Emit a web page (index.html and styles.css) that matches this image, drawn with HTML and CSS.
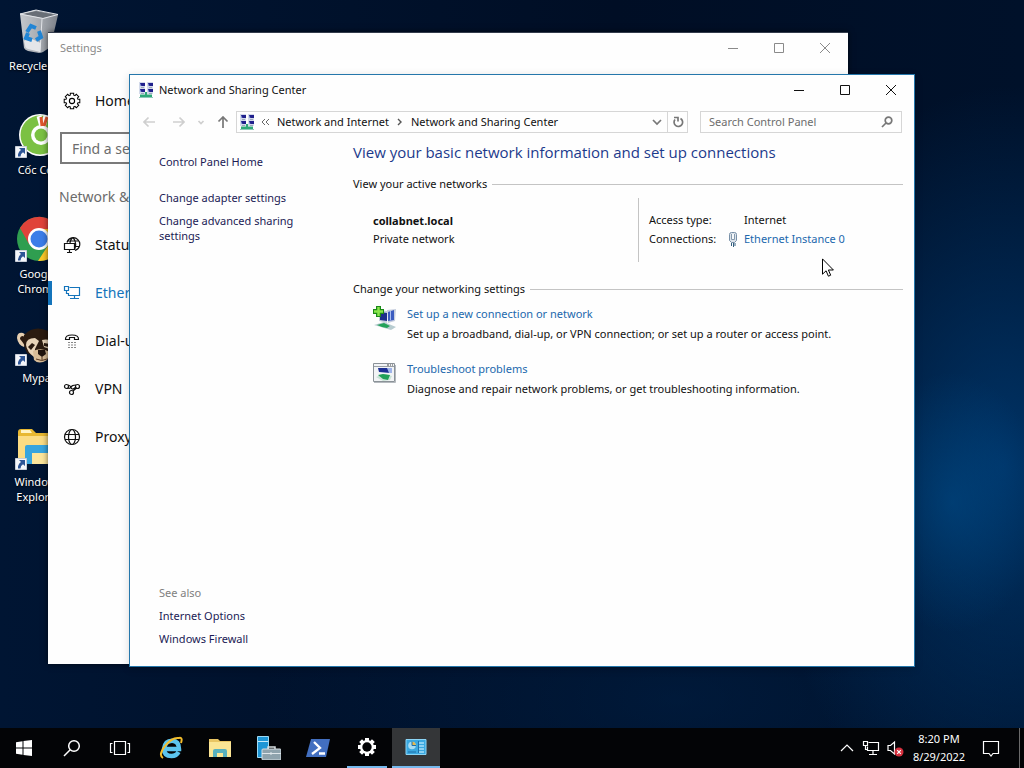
FILE: index.html
```html
<!DOCTYPE html>
<html lang="en">
<head>
<meta charset="utf-8">
<title>Network and Sharing Center</title>
<link rel="stylesheet" href="styles.css">
</head>
<body>
<svg class="defs" aria-hidden="true">
  <defs>
    <symbol id="net" viewBox="0 0 16 16">
      <path fill="#d3daea" d="M1 0h6v6H1zM9 0h6v6H9zM1 6h6v6H1zM9 6h6v6H9z"/>
      <path fill="#20208c" d="M2 1h5v3H2zM10 1h5v3h-5zM2 7h5v3H2zM10 7h5v3h-5z"/>
      <path fill="#8fa0d8" d="M2 1l1.500 3H2zM10 1l1.500 3H10zM2 7l1.500 3H2zM10 7l1.500 3H10z"/>
      <path fill="#8994ac" d="M3 5h3v.8H3zM11 5h3v.8h-3zM3 11h3v.8H3zM11 11h3v.8h-3z"/>
      <path fill="#2fa878" d="M7 10h2v2.500h5V15H2v-2.500h5z"/><path fill="#8fc8b8" d="M1 15h14v1H1z"/>
    </symbol>
    <symbol id="min" viewBox="0 0 12 12"><path d="M1 6.500h10" fill="none" stroke="currentColor"/></symbol>
    <symbol id="max" viewBox="0 0 12 12"><path d="M1.500 1.500h9v9h-9z" fill="none" stroke="currentColor"/></symbol>
    <symbol id="close" viewBox="0 0 12 12"><path d="M1 1l10 10M11 1L1 11" fill="none" stroke="currentColor"/></symbol>
    <symbol id="shortcut" viewBox="0 0 12 12"><path fill="#f4f6fa" stroke="#c8ced8" d="M.5.5h11v11H.5z"/><path fill="#2d5596" d="M4 2h6v6L8 6.200Q5.500 7.500 5.500 10.500H3Q2.500 6.500 6 4z"/></symbol>
  </defs>
</svg>
<div class="screen">
  <main class="desktop">
    <ul class="shortcuts">
      <li class="shortcut">
        <svg class="pic" viewBox="0 0 48 48"><defs><linearGradient id="bin"><stop stop-color="#c5c8cc"/><stop offset=".5" stop-color="#a8acb2"/><stop offset="1" stop-color="#7d828a"/></linearGradient></defs><path fill="url(#bin)" d="M6 6l4 34q1 2 4 3l11 2q2 0 4-1l6-4q2-1 2-3l7-30-23-5z"/><path fill="#686e76" d="M8 6l14-3 20 4-13 3z"/><path fill="none" stroke="#e2e4e8" d="M6 6l16-4 22 4.500-15 4zM28 11l-2 33"/><path fill="#e4e6e9" d="M10 33l6-3 6 3 5 2-1 9-12-3q-3-1-3-4z"/><g fill="none" stroke="#2185d5" stroke-width="4"><path d="M13 24l4-6 5 2M25 23l2 6-5 3M18 32l-6-2 2-5"/></g></svg>
        <span>Recycle Bin</span>
      </li>
      <li class="shortcut">
        <svg class="pic" viewBox="0 0 48 48"><circle cx="26" cy="23" r="21" fill="#fff"/><circle cx="26" cy="23" r="19.500" fill="#7bc143"/><circle cx="27" cy="23" r="10" fill="#fff"/><circle cx="27" cy="23" r="6.500" fill="#7bc143"/><path d="M25 4l3 11M32 4l-3 11" stroke="#fff" stroke-width="5"/><path d="M27 5l1 9M33 5l-3 9" stroke="#e0562c" stroke-width="3"/><use href="#shortcut" x="1" y="34" width="12" height="12"/></svg>
        <span>Cốc Cốc</span>
      </li>
      <li class="shortcut">
        <svg class="pic" viewBox="0 0 48 48"><circle cx="25" cy="23" r="22" fill="#2f9e50"/><path fill="#e0433a" d="M6 12A22 22 0 0 1 45 13H25L15 28z"/><path fill="#fbc72a" d="M25 13h20a22 22 0 0 1-21 32l11-17z"/><circle cx="25" cy="23" r="11" fill="#fff"/><circle cx="25" cy="23" r="8.500" fill="#3b7de8"/><use href="#shortcut" x="1" y="34" width="12" height="12"/></svg>
        <span>Google Chrome</span>
      </li>
      <li class="shortcut">
        <svg class="pic" viewBox="0 0 48 48"><path fill="#e6cfb0" d="M3 18q0-6 6-5l6 4-5 10q-6-2-7-9z"/><path fill="#2b1a10" d="M6 19q0-3 3-3l4 3-3 5z"/><path fill="#2b1b10" d="M10 15Q18 7 28 9t18 12l-5 16-13 4-15-8q-5-10-3-18z"/><path fill="#e8d4b8" d="M12 25q0-7 9-7l4 3-4 8q0 5-1 8-7-5-8-12zM28 20q8-2 12 4l-2 6-8-3z"/><path fill="#2b1b10" d="M14 27l4-4 3 2-4 5zM30 23l6 1-1 3-5-1z"/><path fill="#d8bd98" d="M19 31q8-4 17 1l-3 8q-8 5-13 0z"/><path fill="#20140e" d="M24 30h7l1 4-4 3-4-3z"/><path fill="none" stroke="#5b3b23" d="M28 37v3M22 39q6 3 11 0"/><use href="#shortcut" x="1" y="34" width="12" height="12"/></svg>
        <span>Mypal</span>
      </li>
      <li class="shortcut">
        <svg class="pic" viewBox="0 0 48 48"><path fill="#e8b831" d="M4 8q0-3 3-3h11l4 4h20v8H4z"/><path fill="#fff3c2" d="M7 6h9l2 3H7z"/><path fill="#fbdc83" d="M4 12h40v28H4z"/><path fill="#37a5de" d="M11 23q0-2 2-2h30v19H34V29H18v11h-7z"/><path fill="#fde69b" d="M18 29h16v11H18z"/><use href="#shortcut" x="1" y="34" width="12" height="12"/></svg>
        <span>Windows Explorer</span>
      </li>
    </ul>

    <section class="window settings" aria-label="Settings">
      <header class="titlebar">
        <h2 class="title">Settings</h2>
        <div class="controls">
          <button aria-label="Minimize"><svg><use href="#min"/></svg></button>
          <button aria-label="Maximize"><svg><use href="#max"/></svg></button>
          <button aria-label="Close"><svg><use href="#close"/></svg></button>
        </div>
      </header>
      <nav class="settings-nav">
        <a class="item home" href="#home"><svg viewBox="0 0 18 18"><g stroke="#000" stroke-width="4.400"><path d="M9 .7v16.600M.7 9h16.600M3.100 3.100l11.800 11.800M14.900 3.100L3.100 14.900"/></g><circle cx="9" cy="9" r="6.600"/><g stroke="#fff" stroke-width="2.400"><path d="M9 1.700v14.600M1.700 9h14.600M3.800 3.800l10.400 10.400M14.200 3.800L3.800 14.200"/></g><circle cx="9" cy="9" r="5.700" fill="#fff"/><circle cx="9" cy="9" r="2.600" fill="none" stroke="#000" stroke-width="1.100"/></svg>Home</a>
        <input class="find" type="text" placeholder="Find a setting" aria-label="Find a setting">
        <h3 class="group">Network &amp;</h3>
        <a class="item" href="#status"><svg viewBox="0 0 18 18" class="line"><path d="M4 6.500A6.500 6.500 0 1 1 12 14.500M10 1.500Q7.500 3 7 7M10 1.500q4.500 5 1.500 12M4.500 5h11.500M12 10.500h4.500"/><path d="M1.500 7.500h10v6h-10zM6.500 13.500v3M4 16.500h5"/></svg>Status</a>
        <a class="item active" href="#ethernet"><svg viewBox="0 0 18 18" class="line"><path d="M6.500 3.500h10v8h-11V9M11.500 11.500v3M7 14.500h9M1.500 2.500h4v4h-4zM3.500 6.500v3h2"/></svg>Ethernet</a>
        <a class="item" href="#dialup"><svg viewBox="0 0 18 18" class="line"><path d="M2.500 7.500Q2 3 9 3t6.500 4.500h-4V5.500h-5v2z"/><path stroke-dasharray="1 2" d="M5.500 10.500h8M5.500 13h8M5.500 15.500h8"/></svg>Dial-up</a>
        <a class="item" href="#vpn"><svg viewBox="0 0 18 18" class="line"><circle cx="3.500" cy="6.500" r="2"/><circle cx="8.500" cy="12.500" r="2"/><circle cx="14.500" cy="6.500" r="2"/><path d="M5 5q2 0 3 2.500t3 1l2-1.500M5 8q2 1 3-1t5-2M10 11l3.500-3"/></svg>VPN</a>
        <a class="item" href="#proxy"><svg viewBox="0 0 18 18" class="line"><circle cx="9" cy="9" r="7.500"/><ellipse cx="9" cy="9" rx="3.500" ry="7.500"/><path d="M2 6.500h14M2 11.500h14"/></svg>Proxy</a>
      </nav>
    </section>

    <section class="window center" aria-label="Network and Sharing Center">
      <header class="titlebar">
        <svg class="appicon"><use href="#net"/></svg>
        <h1 class="title">Network and Sharing Center</h1>
        <div class="controls">
          <button aria-label="Minimize"><svg><use href="#min"/></svg></button>
          <button aria-label="Maximize"><svg><use href="#max"/></svg></button>
          <button aria-label="Close"><svg><use href="#close"/></svg></button>
        </div>
      </header>
      <div class="toolbar">
        <div class="history">
          <button class="back" aria-label="Back" disabled><svg viewBox="0 0 12 12"><path d="M12 6H1M5.500 1.500L1 6l4.500 4.500"/></svg></button>
          <button aria-label="Forward" disabled><svg viewBox="0 0 12 12"><path d="M0 6h11M6.500 1.500L11 6l-4.500 4.500"/></svg></button>
          <button class="recent" aria-label="Recent" disabled><svg viewBox="2 0 8 12"><path d="M3.500 5L6 7.500 8.500 5"/></svg></button>
          <button class="up" aria-label="Up"><svg viewBox="0 0 12 12"><path d="M6 12V1M1.500 5.500L6 1l4.500 4.500"/></svg></button>
        </div>
        <div class="address">
          <svg class="appicon"><use href="#net"/></svg>
          <svg class="dbl" viewBox="0 0 9 8"><path d="M4 1L1 4l3 3M8 1L5 4l3 3"/></svg>
          <a href="#internet">Network and Internet</a>
          <svg class="crumb" viewBox="0 0 6 8"><path d="M1 1l3 3-3 3"/></svg>
          <a href="#center">Network and Sharing Center</a>
          <button class="drop" aria-label="Previous locations"><svg viewBox="0 0 12 12"><path d="M2 4l4 4 4-4"/></svg></button>
          <button class="refresh" aria-label="Refresh"><svg viewBox="0 0 12 12"><path d="M8.500 2.500A4.300 4.300 0 1 1 3 3.500M2 1.500h4v4" /></svg></button>
        </div>
        <div class="search">
          <input type="text" placeholder="Search Control Panel" aria-label="Search Control Panel">
          <svg viewBox="0 0 12 12"><circle cx="7.500" cy="4.500" r="3.300"/><path d="M5 7L1 11"/></svg>
        </div>
      </div>
      <div class="body">
        <nav class="side">
          <a class="cph" href="#cph">Control Panel Home</a>
          <a href="#adapter">Change adapter settings</a>
          <a href="#sharing">Change advanced sharing settings</a>
          <h2 class="also">See also</h2>
          <a href="#options">Internet Options</a>
          <a href="#firewall">Windows Firewall</a>
        </nav>
        <div class="content">
          <h2 class="headline">View your basic network information and set up connections</h2>
          <h3 class="rule">View your active networks</h3>
          <div class="network">
            <div class="name"><strong>collabnet.local</strong><span>Private network</span></div>
            <dl class="details">
              <dt>Access type:</dt><dd>Internet</dd>
              <dt>Connections:</dt><dd><svg class="plug" viewBox="0 0 10 16"><path fill="#dce3ea" stroke="#7890a8" d="M1.500 3.500q0-2 2-2h3q2 0 2 2v6l-2 2h-3l-2-2z"/><path fill="#f5f8fa" stroke="#8599ad" d="M3.500 3v5.500h3V3"/><path stroke="#356080" d="M3.500 12v3M5.500 12v4M7 12v3"/></svg><a href="#eth">Ethernet Instance 0</a></dd>
            </dl>
          </div>
          <h3 class="rule">Change your networking settings</h3>
          <ul class="tasks">
            <li>
              <svg viewBox="0 0 24 24"><path fill="#c6cede" d="M6 4l8 1v12l-8-2zM14 4l9-1-1 12-7 2z"/><path fill="#1d2f8c" d="M7 6l7 1v8l-7-1z"/><path fill="#3c5cc0" d="M15 6l6-2v10l-6 1z"/><path fill="#a9bdf0" d="M17 5l1-.4V14l-1 .4z"/><path fill="#b8ccd0" d="M1 19l10-3 12 5-5 3z"/><path fill="#22a25a" d="M4 19l7-2 6 3-3 2-5-1z"/><path stroke="#1b8a18" stroke-width="5" d="M5.500 0v11M0 5.500h11"/><path stroke="#8be64c" stroke-width="2.500" d="M5.500 1v9M1 5.500h9"/></svg>
              <div><a href="#new">Set up a new connection or network</a><p>Set up a broadband, dial-up, or VPN connection; or set up a router or access point.</p></div>
            </li>
            <li>
              <svg viewBox="0 0 24 24"><path fill="#f2f4f6" stroke="#8b9298" d="M.5 2.500h21v18H.5z"/><path fill="none" stroke="#b4b9be" d="M1 21.500h21.500V4"/><path stroke="#9aa0a6" d="M1 5.500h20"/><path stroke="#444" d="M14 4h2M17 4h1M19 4h1"/><path fill="#1c2f94" d="M5 7h12v5l-11-1z"/><path fill="#9fb4ea" d="M14 7h5v5h-3z"/><path fill="#c9e2d6" d="M3 16l8-3 8 2-2 4-7 1z"/><path fill="#20a058" d="M5 14l5-1 7 1-2 5-5-1z"/></svg>
              <div><a href="#trouble">Troubleshoot problems</a><p>Diagnose and repair network problems, or get troubleshooting information.</p></div>
            </li>
          </ul>
        </div>
      </div>
    </section>
    <svg class="cursor" viewBox="0 0 12 19"><path fill="#fff" stroke="#000" d="M.5.9v15.300l3.600-3.400 2.300 5.400 2.300-1-2.300-5.200h5z"/></svg>
  </main>

  <footer class="taskbar">
    <div class="system">
      <button aria-label="Start"><svg viewBox="0 0 24 24"><path fill="#fff" d="M4 6.200l6.500-1v6.300H4zM11.500 5L20 4v7.500h-8.500zM4 12.500h6.500v6.300l-6.500-1zM11.500 12.500H20V20l-8.500-1z"/></svg></button>
      <button aria-label="Search"><svg viewBox="0 0 24 24" fill="none" stroke="#fff" stroke-width="1.500"><circle cx="14" cy="10" r="5.300"/><path d="M10.200 13.800L4 20"/></svg></button>
      <button aria-label="Task view"><svg viewBox="0 0 24 24" fill="none" stroke="#fff" stroke-width="1.200"><path d="M6.500 5.500h11v13h-11zM4.500 7.500h-2v9h2M19.500 7.500h2v9h-2"/></svg></button>
    </div>
    <div class="apps">
      <button aria-label="Internet Explorer"><svg viewBox="0 0 24 24"><path fill="none" stroke="#5cc5ef" stroke-width="4.500" d="M5 13h15Q20 4.700 13 4.700T5 13q0 7 7.500 7 5 0 7-4"/><path fill="none" stroke="#f3bd2c" stroke-width="2" d="M4 22Q-1 19 6 10T20 2q4-1 2 5"/></svg></button>
      <button aria-label="File Explorer"><svg viewBox="0 0 24 24"><path fill="#e9c563" d="M1 3h9l2 2h11v4H1z"/><path fill="#fbe594" d="M1 6h22v15H1z"/><path fill="#58b0bd" d="M5 15q0-2 2-2h10q2 0 2 2v6h-4v-4H9v4H5z"/></svg></button>
      <button aria-label="Server Manager"><svg viewBox="0 0 24 24"><path fill="#1d96d6" stroke="#9cdaf5" d="M.5.5h11v21H.5z"/><path stroke="#c4ebfb" d="M1 5.500h10"/><path fill="none" stroke="#d9dfe2" stroke-width="1.500" d="M11 14v-3h7v3"/><rect x="5" y="13" width="19" height="11" rx="1" fill="#8fa3ad" stroke="#d5dde1"/><path stroke="#dfe6ea" d="M5 17.500h19M14 16v3"/></svg></button>
      <button aria-label="PowerShell"><svg viewBox="0 0 24 24"><path fill="#426fc0" d="M5 3h19l-4 18H0z"/><path fill="none" stroke="#fff" stroke-width="2.300" d="M8 6l6 6-8 6M13 17.500h6"/></svg></button>
      <button class="running" aria-label="Settings"><svg viewBox="0 0 24 24"><path stroke="#fff" stroke-width="4" d="M12 3v18M3 12h18M5.600 5.600l12.800 12.800M18.400 5.600L5.600 18.400"/><circle cx="12" cy="12" r="7" fill="#fff"/><circle cx="12" cy="12" r="4.700" fill="#030406"/></svg></button>
      <button class="running current" aria-label="Control Panel"><svg viewBox="0 0 24 24"><path fill="#3aa8e0" stroke="#8bd4f5" d="M2 4.500h20v15H2z"/><circle cx="8" cy="10.500" r="3.800" fill="#a5dcf5"/><path fill="#e7b84b" d="M8 10.500V6.700a3.800 3.800 0 0 1 3.800 3.800z"/><path fill="none" stroke="#1e6fa8" d="M8 6.500v4h4M4 17h8"/><path stroke="#a8def7" stroke-width="1.500" d="M15 8h5M15 11h5M15 14h5M14 17h6"/><path stroke="#1d6fa8" d="M14.500 6v12"/></svg></button>
    </div>
    <div class="tray">
      <button aria-label="Show hidden icons"><svg viewBox="0 0 18 18"><path d="M3 12l6-6 6 6"/></svg></button>
      <button aria-label="Network"><svg viewBox="0 0 18 18"><path d="M6.500 3.500h10v8h-11v-4M11 11.500v4M7 15.500h8M1.500 2.500h4v4h-4zM3.500 6.500v4h2"/></svg></button>
      <button aria-label="Volume muted"><svg viewBox="0 0 18 18"><path d="M2 6.500h2.500l4-3.500v12l-4-3.500H2z"/><circle cx="13" cy="13" r="4.500" fill="#d5303e" stroke="none"/><path d="M11.200 11.200l3.600 3.600M14.800 11.200l-3.600 3.600"/></svg></button>
      <button class="clock"><time>8:20 PM</time><time>8/29/2022</time></button>
      <button class="notes" aria-label="Notifications"><svg viewBox="0 0 18 18"><path d="M1.500 2.500h15v12H11l-2 2.500-2-2.500H1.500z"/></svg></button>
      <button class="peek" aria-label="Show desktop"></button>
    </div>
  </footer>
</div>
</body>
</html>
```

FILE: styles.css
```css
* { box-sizing: border-box; }
body {
  margin: 0;
  font: 11px/16px "Noto Sans", "Open Sans", sans-serif;
  color: #111;
}
h1, h2, h3, p, ul, dl, dd { margin: 0; padding: 0; font: inherit; }
ul { list-style: none; }
a { color: inherit; text-decoration: none; }
button { border: 0; padding: 0; background: none; color: inherit; font: inherit; display: flex; align-items: center; justify-content: center; }
input { font: inherit; color: #222; outline: 0; min-width: 0; }
input::placeholder { color: #6d6d6d; opacity: 1; }
svg { flex: none; }
.defs { position: absolute; width: 0; height: 0; }

.screen { display: flex; flex-direction: column; height: 100vh; overflow: hidden; background: #001029; }
.desktop {
  flex: 1;
  position: relative;
  background:
    radial-gradient(ellipse 90px 130px at 93% 69%, rgba(0, 88, 155, .4), transparent),
    radial-gradient(ellipse 240px 380px at 98% 64%, rgba(0, 66, 128, .7), transparent),
    radial-gradient(ellipse 420px 180px at 66% 96%, rgba(0, 42, 88, .4), transparent),
    linear-gradient(90deg, #001533, #000e25 60%, #00112a);
}
.shortcuts { display: flex; flex-direction: column; width: 76px; }
.shortcut { height: 104px; padding-top: 8px; display: flex; flex-direction: column; align-items: center; gap: 2px; color: #fff; line-height: 15px; text-align: center; text-shadow: 0 1px 2px #000; }
.shortcut span { padding: 0 8px; }
.shortcut:first-child span { padding: 0; }
.pic { width: 48px; height: 48px; }

.window { position: absolute; background: #fefefe; display: flex; flex-direction: column; }
.settings { left: 48px; top: 32px; right: 176px; bottom: 64px; border-top: 1px solid #333c4c; box-shadow: 0 0 6px rgba(0, 0, 0, .6); }
.center { left: 129px; top: 74px; right: 109px; bottom: 61px; border: 1px solid #2577ab; box-shadow: 0 2px 8px rgba(0, 0, 0, .15); }
.titlebar { display: flex; align-items: center; height: 30px; }
.title { flex: 1; }
.controls { display: flex; align-self: stretch; }
.controls button { width: 46px; }
.controls svg { width: 12px; height: 12px; }
.appicon { width: 16px; height: 16px; }

.settings .title { padding-left: 12px; color: #8a8a8a; }
.settings .controls { color: #8a8a8a; }
.settings-nav { display: flex; flex-direction: column; width: 300px; padding-top: 14px; font-size: 14px; }
.item { display: flex; align-items: center; height: 48px; padding-left: 15px; gap: 14px; }
.item svg { width: 18px; height: 18px; }
.line { fill: none; stroke: currentColor; stroke-width: 1.2; }
.item.active { color: #1474bb; background: linear-gradient(#1474bb, #1474bb) left / 4px 24px no-repeat; }
.find { height: 32px; margin: 7px 12px 17px; padding: 0 10px; border: 2px solid #7a7a7a; background: #fff; }
.group { height: 32px; line-height: 32px; padding-left: 11px; margin-bottom: 8px; color: #6b6b6b; }

.center .titlebar { padding-left: 8px; gap: 5px; }
.toolbar { display: flex; height: 22px; margin: 6px 12px 0; }
.history { display: flex; gap: 12px; width: 94px; padding-left: 1px; color: #777; }
.history .back { margin-right: 6px; }
.history svg, .drop svg, .refresh svg, .search svg { width: 12px; height: 12px; fill: none; stroke: currentColor; stroke-width: 1.7; }
.history .recent svg { width: 8px; }
.history button:disabled { color: #cfcfcf; }
.address { flex: 1; display: flex; align-items: center; border: 1px solid #d6d6d6; padding-left: 2px; line-height: 18px; }
.address .dbl { width: 9px; height: 8px; margin: 0 7px 0 6px; fill: none; stroke: #666; }
.address .crumb { width: 6px; height: 8px; margin: 0 8px; fill: none; stroke: #555; stroke-width: 1.4; }
.drop { margin-left: auto; width: 20px; color: #777; }
.refresh { width: 20px; align-self: stretch; border-left: 1px solid #d6d6d6; color: #777; }
.search { display: flex; align-items: center; width: 202px; margin-left: 12px; padding: 0 8px; border: 1px solid #d6d6d6; color: #777; }
.search input { flex: 1; border: 0; padding: 0; background: none; }

.body { flex: 1; display: flex; }
.side { width: 223px; padding: 21px 50px 20px 29px; display: flex; flex-direction: column; gap: 8px; color: #1b1b55; line-height: 15px; }
.side .cph { margin-bottom: 13px; }
.also { margin-top: auto; color: #808080; }
.content { flex: 1; padding: 9px 11px 0 0; }
.headline { font-family: "Open Sans", "Noto Sans", sans-serif; font-size: 15px; line-height: 20px; color: #1c3a8c; }
.rule { display: flex; align-items: center; gap: 5px; }
.rule::after { content: ""; flex: 1; border-top: 1px solid #c4c4c4; }
.headline + .rule { margin-top: 14px; }
.network { display: flex; height: 64px; margin: 6px 0 19px; }
.name { width: 286px; padding: 15px 0 0 20px; border-right: 1px solid #c4c4c4; display: flex; flex-direction: column; gap: 2px; }
.details { display: grid; grid-template-columns: 78px auto; align-content: start; gap: 3px 0; padding: 14px 0 0 10px; }
.details dd { display: flex; padding-left: 17px; }
.details dd:has(svg) { padding-left: 1px; gap: 6px; }
.plug { width: 10px; height: 16px; }
.details a, .tasks a { color: #2268ad; }
.tasks { padding: 9px 0 0 20px; display: flex; flex-direction: column; gap: 19px; }
.tasks li { display: flex; gap: 10px; }
.tasks svg { width: 24px; height: 24px; }
.tasks p { margin-top: 4px; }
.cursor { position: absolute; left: 822px; top: 258px; width: 12px; height: 19px; }

.taskbar { height: 40px; display: flex; background: #030406; color: #fff; }
.system, .apps, .tray { display: flex; }
.apps { gap: 1px; margin-left: 3px; }
.system button, .apps button { width: 48px; }
.taskbar svg { width: 24px; height: 24px; }
.running { border-bottom: 2px solid #76b9ed; }
.apps .running:not(.current) { width: 40px; margin: 0 4px; }
.apps .current { background-color: #343638; }
.tray { margin-left: auto; }
.tray button { width: 24px; }
.tray svg { width: 18px; height: 18px; fill: none; stroke: #fff; stroke-width: 1.2; }
.tray .clock { width: 64px; flex-direction: column; line-height: 18px; }
.tray .notes { width: 40px; }
.tray .peek { width: 5px; margin-left: 8px; border-left: 1px solid #6a6a6a; }
```
